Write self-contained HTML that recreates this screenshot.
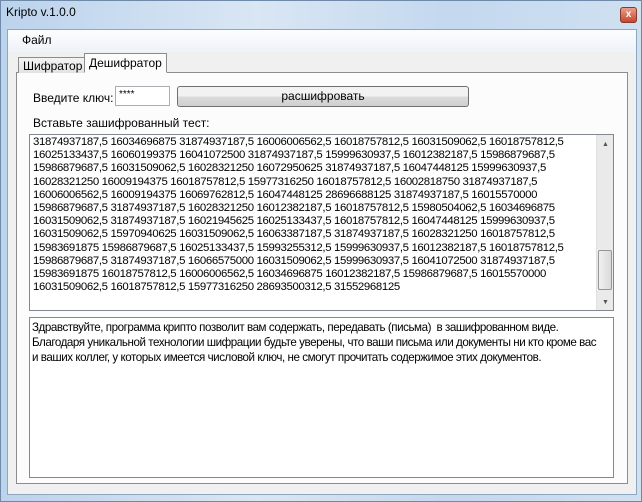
<!DOCTYPE html>
<html><head><meta charset="utf-8"><style>
*{box-sizing:border-box;margin:0;padding:0}
body{width:642px;height:502px;overflow:hidden;background:#c9dbef;font-family:"Liberation Sans",sans-serif;font-size:11px;color:#000;position:relative}
.frame{position:absolute;left:0;top:0;width:642px;height:502px;background:linear-gradient(90deg,#bcd3ec,#d9e6f4 40%,#c4d8ee 70%,#cfe0f1);border:1px solid #6f8aa8}
.title{position:absolute;left:6px;top:5px;font-size:12px}
.close{position:absolute;left:620px;top:7px;width:17px;height:16px;background:linear-gradient(#e8a08a,#c8452c);border:1px solid #8a3a2a;border-radius:3px;color:#fff;font-size:10px;font-weight:bold;text-align:center;line-height:14px}
.client{position:absolute;left:7px;top:29px;width:630px;height:466px;background:#f0f0f0;border:1px solid #8ea6c0}
.menu{position:absolute;left:0;top:0;width:628px;height:22px;background:linear-gradient(#fcfdfe,#eef3f9)}
.menu span{position:absolute;left:14px;top:3px;font-size:12px}
.tab{position:absolute;border:1px solid #8c8c8c;border-bottom:none;background:linear-gradient(#f4f4f4,#e2e2e2);font-size:12px;padding:1px 4px}
.panel{position:absolute;left:16px;top:72px;width:612px;height:412px;background:#fcfcfc;border:1px solid #8c8c8c}
.lbl{position:absolute;font-size:12px}
.tb{position:absolute;background:#fff;border:1px solid #abadb3}
.btn{position:absolute;left:177px;top:86px;width:292px;height:21px;border:1px solid #707070;border-radius:3px;background:linear-gradient(#f2f2f2 50%,#dcdcdc 50%,#cfcfcf);text-align:center;font-size:12px;line-height:19px}
pre{font-family:"Liberation Sans",sans-serif;font-size:11.4px;line-height:13.2px;letter-spacing:-0.35px;position:absolute;left:3px;top:1px;white-space:pre}
.sb{position:absolute;right:0;top:0;width:17px;height:100%;background:#eaeaea;border-left:1px solid #e0e0e0}
.thumb{position:absolute;left:1px;top:115px;width:14px;height:40px;border:1px solid #969696;border-radius:2px;background:linear-gradient(90deg,#f0f0f0,#dadada)}
</style></head><body>
<div class="frame"></div>
<div class="title">Kripto v.1.0.0</div>
<div class="close">x</div>
<div class="client"><div class="menu"><span>Файл</span></div></div>
<div class="panel"></div>
<div class="tab" style="left:18px;top:57px;height:16px">Шифратор</div>
<div class="tab" style="left:84px;top:53px;height:20px;padding-top:2px;background:#fcfcfc;border-bottom:1px solid #fcfcfc">Дешифратор</div>
<div class="lbl" style="left:33px;top:91px">Введите ключ:</div>
<div class="tb" style="left:115px;top:86px;width:55px;height:20px"><span style="position:absolute;left:3px;top:2px;font-size:10px">****</span></div>
<div class="btn">расшифровать</div>
<div class="lbl" style="left:33px;top:116px">Вставьте зашифрованный тест:</div>
<div class="tb" style="left:29px;top:134px;width:585px;height:177px;border-color:#828790">
<pre>31874937187,5 16034696875 31874937187,5 16006006562,5 16018757812,5 16031509062,5 16018757812,5
16025133437,5 16060199375 16041072500 31874937187,5 15999630937,5 16012382187,5 15986879687,5
15986879687,5 16031509062,5 16028321250 16072950625 31874937187,5 16047448125 15999630937,5
16028321250 16009194375 16018757812,5 15977316250 16018757812,5 16002818750 31874937187,5
16006006562,5 16009194375 16069762812,5 16047448125 28696688125 31874937187,5 16015570000
15986879687,5 31874937187,5 16028321250 16012382187,5 16018757812,5 15980504062,5 16034696875
16031509062,5 31874937187,5 16021945625 16025133437,5 16018757812,5 16047448125 15999630937,5
16031509062,5 15970940625 16031509062,5 16063387187,5 31874937187,5 16028321250 16018757812,5
15983691875 15986879687,5 16025133437,5 15993255312,5 15999630937,5 16012382187,5 16018757812,5
15986879687,5 31874937187,5 16066575000 16031509062,5 15999630937,5 16041072500 31874937187,5
15983691875 16018757812,5 16006006562,5 16034696875 16012382187,5 15986879687,5 16015570000
16031509062,5 16018757812,5 15977316250 28693500312,5 31552968125</pre>
<div class="sb"><div style="position:absolute;left:5px;top:6px;font-size:7px;color:#555">▲</div><div class="thumb"></div><div style="position:absolute;left:5px;bottom:4px;font-size:7px;color:#555">▼</div></div>
</div>
<div class="tb" style="left:29px;top:317px;width:585px;height:161px;border-color:#828790">
<pre style="left:2px;top:2px;font-size:11.6px;line-height:15px;letter-spacing:-0.45px">Здравствуйте, программа крипто позволит вам содержать, передавать (письма)  в зашифрованном виде.
Благодаря уникальной технологии шифрации будьте уверены, что ваши письма или документы ни кто кроме вас
и ваших коллег, у которых имеется числовой ключ, не смогут прочитать содержимое этих документов.</pre>
</div>
</body></html>
